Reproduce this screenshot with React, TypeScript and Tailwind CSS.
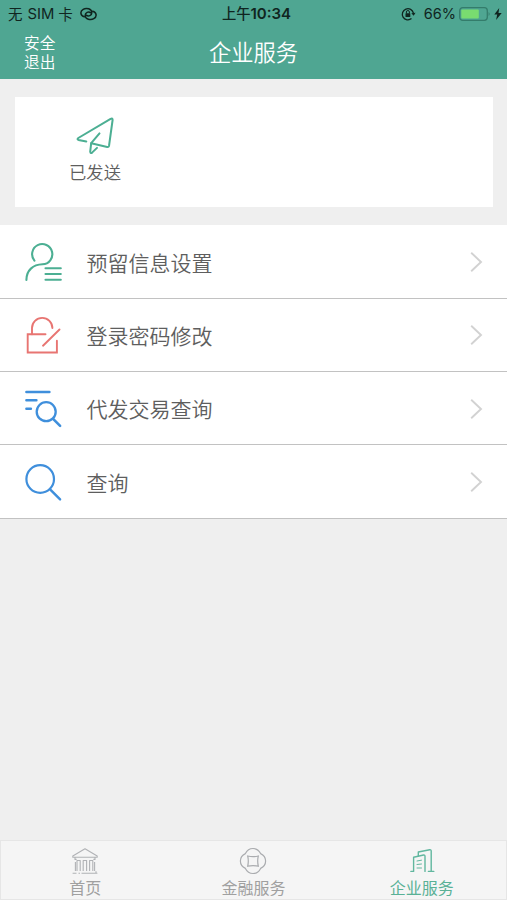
import type { ReactNode } from "react";

const GREEN = "#4caf93";
const BLUE = "#3f8fdc";

function UserIcon() {
  return (
    <svg width="44" height="44" viewBox="0.5 0 44 44" fill="none" stroke={GREEN} strokeWidth="2.1" strokeLinecap="round">
      <path d="M12.9 20.6A10.1 10.1 0 1 1 21 24.3C11.5 24.6 4.9 30.3 4.9 40" />
      <path d="M24 28.3h15.3M24 34h15.3M24 39.7h15.3" />
    </svg>
  );
}

function LockIcon() {
  return (
    <svg width="44" height="44" viewBox="0.5 0 44 44" fill="none" stroke="#e87572" strokeWidth="1.9" strokeLinecap="round">
      <path d="M10.5 21.3v-6.2a10.2 10.2 0 0 1 20.4 0" />
      <path d="M24 21.3H6.2v18.2h29.2V27.8M38 16.5 21.5 32.7" />
    </svg>
  );
}

function ListSearchIcon() {
  return (
    <svg width="44" height="44" viewBox="0.5 0 44 44" fill="none" stroke={BLUE} strokeWidth="2.3" strokeLinecap="round">
      <path d="M4.9 6h23M4.9 14.3h10M4.9 22.7h4.5" strokeWidth="2.5" />
      <circle cx="24.7" cy="25.7" r="9.5" />
      <path d="m31.6 32.8 7 7" strokeWidth="2.6" />
    </svg>
  );
}

function SearchIcon() {
  return (
    <svg width="44" height="44" viewBox="0.5 0 44 44" fill="none" stroke={BLUE} strokeWidth="2.2" strokeLinecap="round">
      <circle cx="18.7" cy="19" r="13.8" />
      <path d="m28.6 29.4 10 10" strokeWidth="2.4" />
    </svg>
  );
}

function PlaneIcon() {
  return (
    <svg width="44" height="44" viewBox="0 0 44 44" fill="none" stroke={GREEN} strokeWidth="2" strokeLinecap="round" strokeLinejoin="round">
      <path d="M13.3 27.6 5.5 25.9Q3.7 25.2 5.3 24L37.6 4.8Q39.8 3.8 39.6 6L36 32Q35.6 33.3 34.2 33L18.2 29.2 26.5 19.4" />
      <path d="M18.2 29.2 17.2 37.6Q17.5 40 19.3 38.4L24 33.9" />
    </svg>
  );
}

function BankIcon() {
  return (
    <svg width="28" height="28" viewBox="0 0 28 28" fill="none" stroke="#b0b2b5" strokeWidth="1.1" strokeLinejoin="round">
      <path d="M1.8 9 14 1.8 26.2 9v1.2H1.8zM4 10.8v1.6h1.6M24 10.8v1.6h-1.6" />
      <path d="M6 24V13.5h3.2V24M12.2 24V13.5h3.4V24M18.6 24V13.5h3.2V24M4.4 24V15M23.6 24V15" />
      <path d="M1.6 26.3h3.9M7.5 26.3h1.5M10.5 26.3h15.9M25 24.2v2" />
    </svg>
  );
}

function CoinIcon() {
  return (
    <svg width="28" height="28" viewBox="0 0 28 28" fill="none" stroke="#aaacaf" strokeWidth="1.2">
      <path d="M6.4 6.6C8.1 3.1 10.6 1.5 14 1.5s5.9 1.6 7.6 5.1c3.4 1.6 5 4.2 5 7.4s-1.6 5.8-5 7.4c-1.7 3.5-4.2 5.1-7.6 5.1s-5.9-1.6-7.6-5.1c-3.4-1.6-5-4.2-5-7.4s1.6-5.8 5-7.4Z" />
      <path d="M8.7 9q5.3 1.2 10.6 0-1.2 5.1 0 10.2-5.3-1.2-10.6 0 1.2-5.1 0-10.2Z" />
    </svg>
  );
}

function BuildingIcon() {
  return (
    <svg width="28" height="28" viewBox="-0.7 0 28 28" fill="none" stroke="#61b79f" strokeWidth="1.4" strokeLinecap="round" strokeLinejoin="round">
      <path d="M2.2 24.4h2.7V10.2l10-2.2q1.4-.2 1.4 1.2v15.2" />
      <path d="M9.6 8.8V5l11.4-2.3q1.5-.2 1.5 1.3v20.4h2.6M19.7 24.4h2.8" />
      <path d="m8.3 14 4.5-.8M8.3 17.5l4.5-.5M8.3 21h4.5" strokeWidth="1" />
    </svg>
  );
}

function Row({ icon, label }: { icon: ReactNode; label: string }) {
  return (
    <div className="flex h-[73.3px] items-center border-b border-[#c2c2c2] bg-white pr-[24px] pl-[22px]">
      {icon}
      <span className="ml-[20.5px] flex-1 text-[21px] leading-8 font-[350] text-[#5e5e5e]">{label}</span>
      <svg className="mt-[1px]" width="13" height="22" viewBox="0 0 13 22" fill="none" stroke="#d2d2d2" strokeWidth="1.9">
        <path d="m1.2 1.7 9.8 9.3-9.8 9.3" />
      </svg>
    </div>
  );
}

function Tab({ icon, label, color }: { icon: ReactNode; label: string; color: string }) {
  return (
    <div className={`flex flex-1 flex-col items-center pt-[6px] ${color}`}>
      {icon}
      <span className="mt-[2px] text-[16px] leading-[20px]">{label}</span>
    </div>
  );
}

export default function App() {
  return (
    <div className="flex h-[900px] w-full flex-col overflow-hidden bg-[#efefef] font-['Noto_Sans_CJK_SC',sans-serif]">
      <header className="h-[79px] shrink-0 bg-[#4fa692]">
        <div className="grid h-[27px] grid-cols-[1fr_auto_1fr] items-center text-[14.5px] text-[#10251f]">
          <div className="flex items-center pl-[8px] leading-5">
            <span>无</span>
            <span className="ml-[5px] font-['Inter'] text-[14.8px]">SIM</span>
            <span className="ml-[4px]">卡</span>
            <svg className="ml-[7.5px]" width="17" height="14" viewBox="0 0 17 14" fill="none" stroke="currentColor" strokeWidth="1.5" strokeLinecap="round">
              <path d="M4.3 9.8C.3 8.7-.3 4.4 3.2 2.3c3.3-2 8.5-.4 8.6 3.3.1 2.9-3.4 4.3-5.5 2.6" />
              <path d="M12.7 4.2c4 1.1 4.6 5.4 1.1 7.5-3.3 2-8.5.4-8.6-3.3-.1-2.9 3.4-4.3 5.5-2.6" />
            </svg>
          </div>
          <div className="pl-[6px] text-[14.3px] leading-5 font-medium">上午<span className="font-['Inter'] text-[15px] font-semibold">10:34</span></div>
          <div className="flex items-center justify-end pr-[5.5px]">
            <svg width="15" height="14" viewBox="0 0 15 14" fill="none" stroke="currentColor" strokeWidth="1.3">
              <path d="M10.5 11.6A5.6 5.6 0 1 1 12.4 6.2" />
              <path d="m10.3 6.2 4.2-.4-1.8 3Z" fill="currentColor" stroke="none" />
              <path d="M5.4 6.5V5a1.5 1.5 0 0 1 3 0v1.5" strokeWidth="1" />
              <rect x="4.5" y="6.2" width="4.8" height="3.8" rx=".5" fill="currentColor" stroke="none" />
            </svg>
            <span className="ml-[7.5px] font-['Inter'] text-[14.5px] leading-5">66%</span>
            <svg className="ml-[3px]" width="32" height="14" viewBox="0 0 32 14">
              <rect x=".7" y=".7" width="27.6" height="12.6" rx="3" fill="none" stroke="#347c6b" strokeWidth="1.3" />
              <rect x="2.3" y="2.4" width="17.5" height="9.2" rx="1" fill="#79dc70" />
              <path d="M29.6 5q2 2 0 4Z" fill="#347c6b" />
            </svg>
            <svg className="ml-[2.5px]" width="8" height="12" viewBox="0 0 8 12" fill="currentColor">
              <path d="M5.2 0 .3 6.5h2.9L2.1 12 7.7 5H4.5Z" />
            </svg>
          </div>
        </div>
        <div className="grid h-[52px] grid-cols-[1fr_auto_1fr] text-white">
          <p className="pt-[7px] pl-[24px] text-[15.7px] leading-[18.5px] font-[350]">安全<br />退出</p>
          <h1 className="pt-[8px] text-[22.3px] leading-[32px] font-[350]">企业服务</h1>
        </div>
      </header>
      <main className="flex-1">
        <section className="mt-[18.4px] mr-[14px] ml-[15px] h-[110px] bg-white pt-[17.1px] pl-[54px]">
          <div className="flex w-[52px] flex-col items-center">
            <PlaneIcon />
            <span className="mt-[2px] text-[17.3px] leading-[24px] font-[350] whitespace-nowrap text-[#5e5e5e]">已发送</span>
          </div>
        </section>
        <section className="mt-[18.1px]">
          <Row icon={<UserIcon />} label="预留信息设置" />
          <Row icon={<LockIcon />} label="登录密码修改" />
          <Row icon={<ListSearchIcon />} label="代发交易查询" />
          <Row icon={<SearchIcon />} label="查询" />
        </section>
      </main>
      <nav className="flex h-[60px] shrink-0 border border-[#e6e6e6] bg-[#f5f5f5]">
        <Tab icon={<BankIcon />} label="首页" color="text-[#a0a0a0]" />
        <Tab icon={<CoinIcon />} label="金融服务" color="text-[#a0a0a0]" />
        <Tab icon={<BuildingIcon />} label="企业服务" color="text-[#59b196]" />
      </nav>
    </div>
  );
}
